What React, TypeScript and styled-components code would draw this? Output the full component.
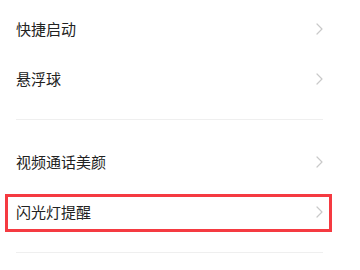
import React from "react";
import styled, { createGlobalStyle } from "styled-components";

const GlobalStyle = createGlobalStyle`
    html, body {
        margin: 0;
        padding: 0;
        background: #ffffff;
    }
    body {
        font-family: "Noto Sans CJK SC", "Noto Sans", sans-serif;
    }
`;

const Page = styled.div`
    width: 360px;
    height: 270px;
    overflow: hidden;
    background: #ffffff;
`;

const Section = styled.div<{ top: number }>`
    padding-top: ${(props) => props.top}px;
`;

const Divider = styled.div`
    height: 1px;
    margin: 15px 37px 0 16px;
    background: #efefef;
`;

const Row = styled.div`
    position: relative;
    display: flex;
    align-items: center;
    justify-content: space-between;
    height: 50px;
    padding: 0 37px 0 16px;
`;

const Label = styled.span`
    font-size: 15px;
    color: #222222;
    line-height: 1;
    margin-top: -2px;
`;

const Highlight = styled.div`
    position: absolute;
    left: 5px;
    top: 7px;
    width: 321px;
    height: 32px;
    border: 3px solid #f53a41;
    pointer-events: none;
`;

const Chevron = () => (
    <svg width="7" height="12" viewBox="0 0 7 12" fill="none">
        <path d="M1 1l5 5-5 5" stroke="#c9c9c9" strokeWidth="1.2" strokeLinecap="round" strokeLinejoin="round" />
    </svg>
);

type Item = { label: string; marked?: boolean };

const groups: { top: number; items: Item[] }[] = [
    { top: 4, items: [{ label: "快捷启动" }, { label: "悬浮球" }] },
    { top: 17, items: [{ label: "视频通话美颜" }, { label: "闪光灯提醒", marked: true }] },
];

export default function App() {
    return (
        <Page>
            <GlobalStyle />
            {groups.map((group, gi) => (
                <Section key={gi} top={group.top}>
                    {group.items.map((item) => (
                        <Row key={item.label}>
                            <Label>{item.label}</Label>
                            <Chevron />
                            {item.marked && <Highlight />}
                        </Row>
                    ))}
                    <Divider />
                </Section>
            ))}
        </Page>
    );
}
